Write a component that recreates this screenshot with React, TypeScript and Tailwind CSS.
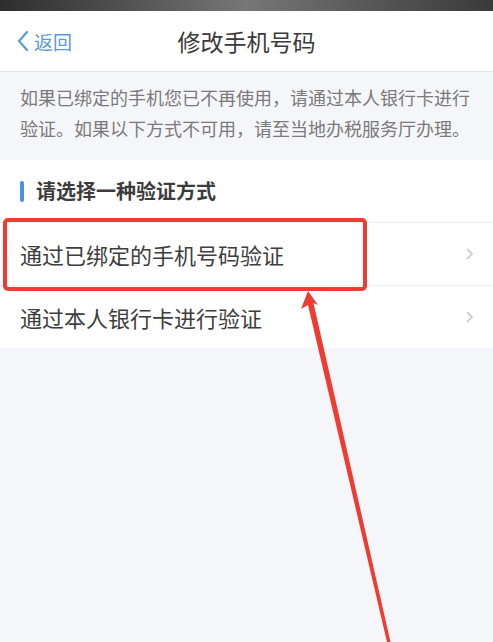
import React from 'react';

const rows = ['通过已绑定的手机号码验证', '通过本人银行卡进行验证'];

const Chevron: React.FC = () => (
  <svg width="8" height="12" viewBox="0 0 8 12" className="shrink-0">
    <path d="M1.5 1.5 L6 6 L1.5 10.5" fill="none" stroke="#cfcfcf" strokeWidth="1.8" strokeLinecap="round" strokeLinejoin="round" />
  </svg>
);

const App: React.FC = () => {
  return (
    <div
      className="relative w-[493px] h-[642px] overflow-hidden bg-[#f5f6f9]"
      style={{ fontFamily: '"Noto Sans CJK SC", "Noto Sans", sans-serif' }}
    >
      {/* Top edge of the phone frame */}
      <div className="h-[11px] bg-gradient-to-r from-[#2e2e2e] via-[#777777] to-[#3a3a3a]" />

      {/* Nav bar */}
      <div className="relative h-[61px] bg-white border-b border-[#e6e6e8] flex items-center justify-center">
        <div className="absolute left-[16px] top-0 h-full flex items-center text-[#5b9ad6]">
          <svg width="14" height="24" viewBox="0 0 14 24">
            <path d="M11 3 L3 12 L11 21" fill="none" stroke="#5b9ad6" strokeWidth="2.2" strokeLinecap="round" strokeLinejoin="round" />
          </svg>
          <span className="text-[19px] leading-none ml-[4px]">返回</span>
        </div>
        <span className="text-[23px] leading-none text-[#3a3a3a]">修改手机号码</span>
      </div>

      {/* Notice */}
      <div className="px-[20px] pt-[10px] pb-[16px] text-[18px] leading-[31px] text-[#7a7a7a]">
        <p>如果已绑定的手机您已不再使用，请通过本人银行卡进行</p>
        <p>验证。如果以下方式不可用，请至当地办税服务厅办理。</p>
      </div>

      {/* Section */}
      <div className="bg-white">
        <div className="h-[62px] flex items-center px-[20px] gap-[12px]">
          <div className="w-[4px] h-[21px] rounded-full bg-[#4a90e2]" />
          <span className="text-[20px] font-bold text-[#3c3c3c]">请选择一种验证方式</span>
        </div>
        {rows.map((label) => (
          <div
            key={label}
            className="h-[63px] border-t border-[#ededef] flex items-center justify-between pl-[20px] pr-[19px]"
          >
            <span className="text-[22px] text-[#3e3e3e]">{label}</span>
            <Chevron />
          </div>
        ))}
      </div>

      {/* Annotation overlay */}
      <svg className="absolute left-0 top-0 pointer-events-none" width="493" height="642" viewBox="0 0 493 642">
        <rect x="5" y="220" width="360" height="69" rx="3" fill="none" stroke="#ef3b32" strokeWidth="4" />
        <polygon
          points="308,291 318,305 313.5,303 390.5,642 387,642 308,305 301,309"
          fill="#ef3b32"
        />
      </svg>
    </div>
  );
};

export default App;
